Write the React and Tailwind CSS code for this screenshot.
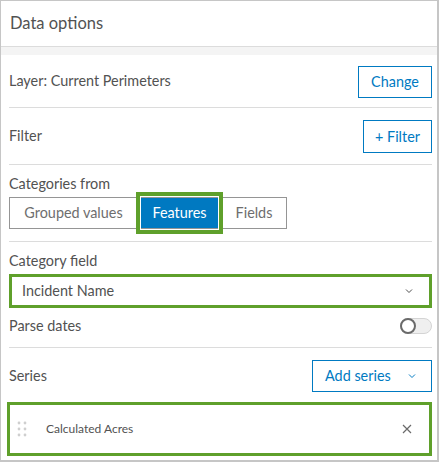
import React from "react";

const Chevron = ({ className }) => (
  <svg viewBox="0 0 16 16" className={className} fill="none" stroke="currentColor" strokeWidth="1.3">
    <path d="M4 6l4 4 4-4" />
  </svg>
);

export default function App() {
  return (
    <div className="w-[439px] h-[464px] bg-white text-[#525252]" style={{ fontFamily: "Lato, 'Open Sans', sans-serif" }}>
      <div className="w-[439px] h-[462px] border-t border-l border-r-2 border-b-2 border-[#c6c6c6] flex flex-col">
        <div className="h-[46px] shrink-0 border-b border-[#dcdcdc] flex items-center pl-[9px] text-[16.5px]">
          Data options
        </div>
        <div className="h-[8px] shrink-0 bg-[#f4f4f4]" />
        <div className="ml-[8px] w-[423px] flex flex-col text-[14.4px]">
          <div className="h-[53px] flex items-center justify-between border-b border-[#dcdcdc]">
            <span>Layer: Current Perimeters</span>
            <button className="h-[32px] w-[74px] border border-[#007ac2] text-[#007ac2] mt-[1px]">Change</button>
          </div>
          <div className="h-[57px] flex items-center justify-between border-b border-[#dcdcdc]">
            <span>Filter</span>
            <button className="h-[33px] w-[69px] border border-[#007ac2] text-[#007ac2] mt-[1px]">+ Filter</button>
          </div>
          <div className="pt-[9px] pb-[12px] border-b border-[#dcdcdc]">
            <div className="h-[20px] leading-[20px]">Categories from</div>
            <div className="relative mt-[3px] flex h-[32px] w-[278px] border border-[#959595] text-[#6e6e6e]">
              <div className="w-[127px] flex items-center justify-center">Grouped values</div>
              <div className="w-[85px] flex items-center justify-center bg-[#0079c1] text-white">Features</div>
              <div className="flex-1 flex items-center justify-center">Fields</div>
              <div className="absolute left-[126px] top-[-6px] w-[87px] h-[42px] border-[4px] border-[#5fa02b] shadow-[inset_0_0_0_1px_white]" />
            </div>
          </div>
          <div className="pt-[9px] pb-[11px] border-b border-[#dcdcdc]">
            <div className="h-[20px] leading-[20px]">Category field</div>
            <div className="mt-[3px] h-[34px] border-[3px] border-[#5fa02b] flex items-center justify-between pl-[10px] pr-[14px]">
              <span>Incident Name</span>
              <Chevron className="w-[12px] h-[12px] text-[#4a4a4a]" />
            </div>
            <div className="mt-[8px] h-[20px] flex items-center justify-between">
              <span>Parse dates</span>
              <div className="relative w-[32px] h-[16px] rounded-full bg-[#efefef] border border-[#d4d4d4]">
                <div className="absolute left-[-1px] top-[-1px] w-[16px] h-[16px] rounded-full bg-white border-2 border-[#6a6a6a]" />
              </div>
            </div>
          </div>
          <div className="mt-[12px] h-[32px] flex items-center justify-between">
            <span>Series</span>
            <button className="h-[32px] w-[120px] border border-[#007ac2] text-[#007ac2] flex items-center justify-between pl-[12px] pr-[13px]">
              <span>Add series</span>
              <Chevron className="w-[12px] h-[12px]" />
            </button>
          </div>
          <div className="mt-[10px] -ml-[2px] w-[425px] h-[54px] border-[3px] border-[#5fa02b] flex items-center pl-[7px] pr-[17px]">
            <svg width="10" height="16" viewBox="0 0 10 16" className="shrink-0">
              {[2, 8, 14].map((y) =>
                [2, 8].map((x) => <circle key={`${x}-${y}`} cx={x} cy={y} r="1.4" fill="#cfcfcf" />)
              )}
            </svg>
            <span className="ml-[19px] text-[12px] flex-1">Calculated Acres</span>
            <svg width="10" height="10" viewBox="0 0 10 10" stroke="#6a6a6a" strokeWidth="1.2">
              <path d="M1 1l8 8M9 1l-8 8" />
            </svg>
          </div>
        </div>
      </div>
    </div>
  );
}
